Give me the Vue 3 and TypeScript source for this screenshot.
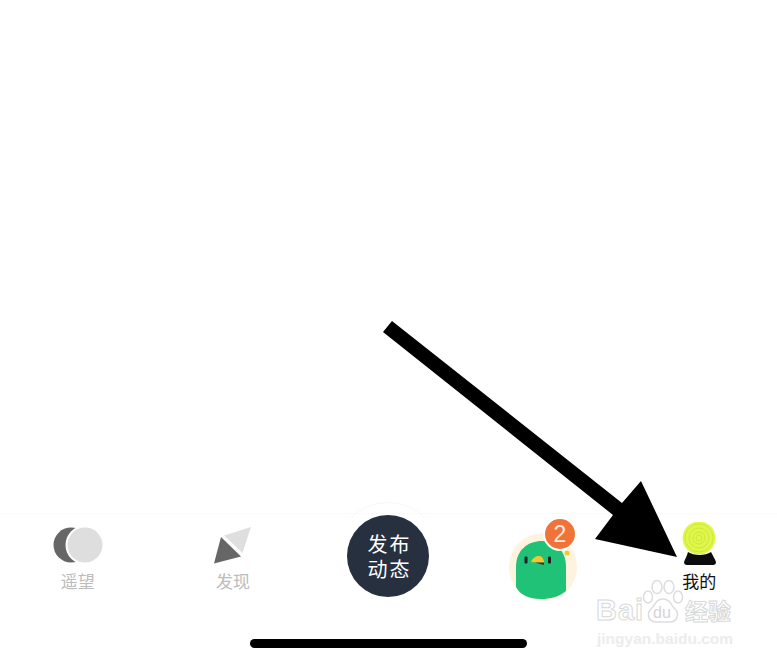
<script setup lang="ts">
const rings = [14, 10, 6, 3]
</script>

<template>
<div class="page">
  <div class="spacer"></div>

  <div class="tabbar">
    <div class="tabs">
      <div class="tab">
        <svg class="tab-icon" width="60" height="49" viewBox="48 521 60 49">
          <circle cx="71" cy="544" r="17.5" fill="#666" />
          <circle cx="85" cy="544" r="19.5" fill="#fff" />
          <circle cx="85" cy="544" r="17.5" fill="#dedede" />
        </svg>
        <span class="tab-label">遥望</span>
      </div>

      <div class="tab">
        <svg class="tab-icon" width="60" height="49" viewBox="204 521 60 49">
          <path d="M225 534.500 L252 526 L243.500 552 Z" fill="#dfdfdf" />
          <path d="M222 536 L242 555.500 L215 562.500 Z" fill="#666" />
        </svg>
        <span class="tab-label">发现</span>
      </div>

      <div class="tab">
        <button class="post-button">
          <span>发布</span>
          <span>动态</span>
        </button>
      </div>

      <div class="tab">
        <div class="avatar">
          <svg width="72" height="72" viewBox="509 530 72 72">
            <circle cx="544" cy="566" r="34" fill="#fdf3df" />
            <path
              d="M517 586 L517 566 C517 549 529 540 543 540 C557 540 567 550 567 566 L567 590 C560 596 551 598 542 598 C530 598 521 594 517 586 Z"
              fill="#1fc276"
            />
            <rect x="525.500" y="555.500" width="3" height="7" rx="1" fill="#222" />
            <rect x="549" y="555.500" width="3" height="7" rx="1" fill="#222" />
            <path d="M532 561 C534 556 538 554.500 541 555 C544 556 545 559 545 562 Z" fill="#f5c72f" />
            <path d="M536 561.500 L545 561.500 L545 564 Z" fill="#333" />
            <circle cx="568" cy="552" r="2.500" fill="#f5c72f" />
          </svg>
          <span class="badge">2</span>
        </div>
      </div>

      <div class="tab">
        <svg class="tab-icon" width="60" height="49" viewBox="669 521 60 49">
          <circle cx="699" cy="537" r="16.500" fill="#e0f64a" />
          <circle
            v-for="r in rings"
            :key="r"
            cx="699"
            cy="537"
            :r="r"
            fill="none"
            stroke="#cbe83c"
            stroke-width="1"
          />
          <path d="M688 551 C694 555 705 555 711 551 C713 555 715 558 716 561 C716 563 715 564 713 564 L687 564 C685 564 684 563 684 561 C685 558 687 555 688 551 Z" fill="#0c0c0c" />
        </svg>
        <span class="tab-label active">我的</span>
      </div>
    </div>

    <div class="home-bar"></div>
  </div>

  <svg class="arrow" width="777" height="663" viewBox="0 0 777 663">
    <path d="M392 321 L622 503 L641 481 L677 557 L595 539 L613 515 L383 332 Z" fill="#000" />
  </svg>

  <div class="watermark">
    <svg class="paw" width="42" height="44" viewBox="0 0 42 44">
      <g fill="#fff" stroke="#ddd" stroke-width="1.500">
        <ellipse cx="6" cy="17" rx="4.500" ry="6" />
        <ellipse cx="15" cy="7" rx="5" ry="6.500" />
        <ellipse cx="27" cy="7" rx="5" ry="6.500" />
        <ellipse cx="36" cy="17" rx="4.500" ry="6" />
        <path d="M21 19 C28 19 29 25 33 29 C38 34 35 42 28 42 L14 42 C7 42 4 34 9 29 C13 25 14 19 21 19 Z" />
      </g>
    </svg>
    <span class="wm-bai">Bai</span>
    <span class="wm-du">du</span>
    <span class="wm-cn">经验</span>
    <span class="wm-url">jingyan.baidu.com</span>
  </div>
</div>
</template>

<style scoped>
.page{
  position: relative;
  display: flex;
  flex-direction: column;
  height: 663px;
  overflow: hidden;
  background: #fff;
  font-family: "Noto Sans CJK SC", "Liberation Sans", sans-serif;
}

.spacer{
  flex-grow: 1;
}

.tabbar{
  display: flex;
  flex-direction: column;
  align-items: center;
  height: 150px;
  box-sizing: border-box;
  padding-top: 8px;
  padding-bottom: 15px;
  border-top: 1px solid #fafafa;
}

.tabs{
  display: grid;
  grid-template-columns: repeat(5, 1fr);
  width: 100%;
  flex-grow: 1;
}

.tab{
  position: relative;
  display: flex;
  flex-direction: column;
  align-items: center;
}

.tab-icon{
  display: block;
}

.tab-label{
  font-size: 17px;
  line-height: 20px;
  color: #bcbcbc;
}

.tab-label.active{
  color: #111;
}

.post-button{
  position: relative;
  display: flex;
  flex-direction: column;
  align-items: center;
  justify-content: center;
  width: 82px;
  height: 82px;
  margin-top: -7px;
  padding: 0 0 0 2px;
  border: none;
  border-radius: 50%;
  background: #27303f;
  color: #fff;
  font-family: inherit;
  font-size: 20px;
  line-height: 25px;
  letter-spacing: 2px;
}

.post-button::before{
  content: "";
  position: absolute;
  left: -12px;
  top: -13px;
  width: 104px;
  height: 104px;
  border-radius: 50%;
  border: 1px solid #f7f7f7;
  clip-path: inset(0 0 85% 0);
}

.avatar{
  position: relative;
  width: 72px;
  height: 72px;
  margin-top: 9px;
}

.avatar svg{
  display: block;
}

.badge{
  position: absolute;
  left: 35px;
  top: -14px;
  width: 30px;
  height: 30px;
  border: 2px solid #fff;
  border-radius: 50%;
  background: #f0743a;
  color: #fde8dc;
  font-family: "Liberation Sans", sans-serif;
  font-size: 23px;
  line-height: 30px;
  text-align: center;
}

.home-bar{
  width: 277px;
  height: 9px;
  border-radius: 5px;
  background: #000;
}

.arrow{
  position: absolute;
  left: 0;
  top: 0;
  pointer-events: none;
}

.watermark{
  position: absolute;
  left: 595px;
  top: 580px;
  width: 142px;
  height: 68px;
  pointer-events: none;
}

.paw{
  position: absolute;
  left: 47px;
  top: 0;
}

.wm-bai{
  position: absolute;
  left: 1px;
  top: 13px;
  font-family: "Liberation Sans", sans-serif;
  font-size: 29px;
  font-weight: 700;
  line-height: 34px;
  letter-spacing: 1px;
  color: #fff;
  -webkit-text-stroke: 1px #d8d8d8;
}

.wm-du{
  position: absolute;
  left: 58px;
  top: 24px;
  font-family: "Liberation Sans", sans-serif;
  font-size: 16px;
  line-height: 18px;
  color: #d4d4d4;
}

.wm-cn{
  position: absolute;
  left: 90px;
  top: 16px;
  font-size: 23px;
  font-weight: 700;
  line-height: 28px;
  color: #fff;
  -webkit-text-stroke: 1px #d8d8d8;
}

.wm-url{
  position: absolute;
  left: 2px;
  top: 49px;
  font-family: "Liberation Sans", sans-serif;
  font-size: 15.5px;
  font-weight: 700;
  line-height: 20px;
  color: #ececec;
  white-space: nowrap;
}
</style>
